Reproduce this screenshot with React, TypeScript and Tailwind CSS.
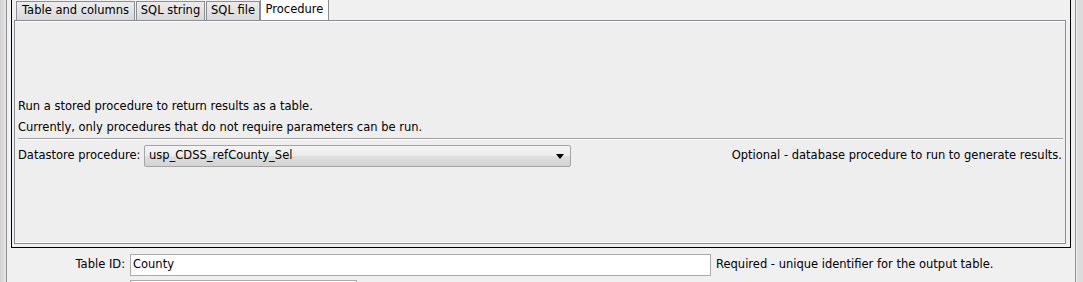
const tabs = [
  { label: "Table and columns", w: "w-[119px]" },
  { label: "SQL string", w: "w-[69px]" },
  { label: "SQL file", w: "w-[54px]" },
];

const App = () => {
  return (
    <div className="w-[1083px] h-[282px] bg-[#f0f0f0] flex overflow-hidden font-['DejaVu_Sans',sans-serif] text-[11.5px] text-black">
      {/* left edge */}
      <div className="w-[6px] shrink-0 bg-[linear-gradient(90deg,#d0d0d0,#e6e6e6)]" />
      <div className="w-px shrink-0 bg-[#8f8f8f]" />

      <div className="w-[1068px] shrink-0 flex flex-col">
        {/* tabbed pane in black frame */}
        <div className="shrink-0 ml-[4px] mr-[4px] h-[248px] border-x border-b border-black pl-[2px] pr-[4px] pb-[3px] flex flex-col">
          <div className="shrink-0 h-[20px] flex items-start pl-[2px] gap-[1px]">
            {tabs.map((t) => (
              <div
                key={t.label}
                className={`${t.w} h-[19px] mt-[1px] border border-b-0 border-[#8c8e94] bg-[linear-gradient(#ececec,#e3e3e3_50%,#d9d9d9)] flex items-center justify-center`}
              >
                {t.label}
              </div>
            ))}
            <div className="relative z-10 w-[69px] h-[21px] mt-[-1px] -ml-[1px] border border-b-0 border-[#8c8e94] bg-white flex items-center justify-center pb-[1px]">
              Procedure
            </div>
          </div>
          <div className="flex-1 border border-[#898c95] bg-[#eeeeee] shadow-[inset_0_1px_0_#ffffff,inset_0_-1px_0_#ffffff] flex flex-col pl-[3px] pr-[2px] pt-[75px]">
            <div className="h-[21px] flex items-center">
              Run a stored procedure to return results as a table.
            </div>
            <div className="h-[21px] flex items-center">
              Currently, only procedures that do not require parameters can be run.
            </div>
            <div className="h-[2px] border-t border-[#a0a0a0] bg-white" />
            <div className="mt-[5px] h-[22px] flex items-center">
              <div className="w-[126px]">Datastore procedure:</div>
              <div className="w-[427px] h-[22px] border border-[#a5a5a5] rounded-[2px] bg-[linear-gradient(#f3f3f3,#ececec_50%,#dfdfdf_50%,#d3d3d3)] flex items-center pl-[4px] pr-[6px]">
                <span className="flex-1">usp_CDSS_refCounty_Sel</span>
                <svg width="8" height="5" viewBox="0 0 8 5">
                  <path d="M0 0h8L4 5z" fill="#000" />
                </svg>
              </div>
              <div className="ml-auto pr-[1px]">
                Optional - database procedure to run to generate results.
              </div>
            </div>
          </div>
        </div>

        {/* table id row */}
        <div className="shrink-0 mt-[6px] flex items-center h-[22px]">
          <div className="w-[118px] text-right">Table ID:</div>
          <div className="ml-[5px] w-[581px] h-[22px] border border-[#ababab] bg-white flex items-center pl-[2px]">
            County
          </div>
          <div className="ml-[5px]">Required - unique identifier for the output table.</div>
        </div>
        <div className="shrink-0 mt-[4px] ml-[123px] w-[227px] h-[22px] border border-[#ababab] bg-white" />
      </div>

      {/* right edge */}
      <div className="w-px shrink-0 bg-[#8f8f8f]" />
      <div className="w-px shrink-0" />
      <div className="w-[6px] shrink-0 bg-[#dcdcdc]" />
    </div>
  );
};

export default App;
